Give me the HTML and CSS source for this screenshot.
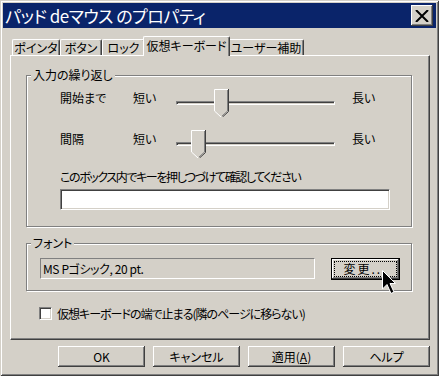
FILE: index.html
```html
<!DOCTYPE html>
<html lang="ja">
  <head>
    <meta charset="UTF-8" />
    <title>パッド deマウス のプロパティ</title>
    <link rel="stylesheet" href="styles.css">
  </head>
  <body>
    <div class="window">
      <div class="titlebar">
        <span class="title">パッド deマウス のプロパティ</span>
        <div class="close">
          <svg width="14" height="12" viewBox="0 0 14 12">
            <path d="M1 0 L13 12 M13 0 L1 12" stroke="#000" stroke-width="2" fill="none" />
          </svg>
        </div>
      </div>

      <div class="content">
        <div class="tabs">
          <div class="tab" style="width: 48px">ポインタ</div>
          <div class="tab" style="width: 42px">ボタン</div>
          <div class="tab" style="width: 43px">ロック</div>
          <div class="tab active" style="width: 87px">仮想キーボード</div>
          <div class="tab" style="width: 76px">ユーザー補助</div>
        </div>

        <div class="panel">
          <div class="group repeat">
            <span class="legend">入力の繰り返し</span>

            <div class="srow">
              <span class="name">開始まで</span>
              <span class="short">短い</span>
              <div class="slider">
                <div class="track"></div>
                <svg class="thumb" style="left: 42px" width="15" height="28" viewBox="0 0 15 28">
                  <polygon points="0,0 15,0 15,22 8,28 7,28 0,22" fill="#d4d0c8" />
                  <path d="M0.5 22 V0.5 H14" stroke="#fff" fill="none" />
                  <path d="M0.5 22 L7 28" stroke="#fff" fill="none" />
                  <path d="M14.5 0 V22.5 L8.5 28" stroke="#404040" fill="none" />
                  <path d="M13.5 1 V22 L8 27" stroke="#808080" fill="none" />
                </svg>
              </div>
              <span class="long">長い</span>
            </div>

            <div class="srow">
              <span class="name">間隔</span>
              <span class="short">短い</span>
              <div class="slider">
                <div class="track"></div>
                <svg class="thumb" style="left: 19px" width="15" height="28" viewBox="0 0 15 28">
                  <polygon points="0,0 15,0 15,22 8,28 7,28 0,22" fill="#d4d0c8" />
                  <path d="M0.5 22 V0.5 H14" stroke="#fff" fill="none" />
                  <path d="M0.5 22 L7 28" stroke="#fff" fill="none" />
                  <path d="M14.5 0 V22.5 L8.5 28" stroke="#404040" fill="none" />
                  <path d="M13.5 1 V22 L8 27" stroke="#808080" fill="none" />
                </svg>
              </div>
              <span class="long">長い</span>
            </div>

            <div class="hint">このボックス内でキーを押しつづけて確認してください</div>
            <div class="keybox"></div>
          </div>

          <div class="group fontgroup">
            <span class="legend">フォント</span>
            <div class="fontrow">
              <div class="fontbox">MS Pゴシック, 20 pt.</div>
              <div class="btn default"><span class="focus">変更...</span></div>
            </div>
          </div>

          <div class="check">
            <span class="box"></span>
            <span class="checklabel">仮想キーボードの端で止まる(隣のページに移らない)</span>
          </div>
        </div>

        <div class="buttons">
          <div class="btn">OK</div>
          <div class="btn">キャンセル</div>
          <div class="btn">適用(<u>A</u>)</div>
          <div class="btn">ヘルプ</div>
        </div>
      </div>

      <svg class="cursor" width="14" height="25" viewBox="0 0 14 25">
        <path d="M0.5 0.5 V19 L5 14.5 L9 23.5 L12 22 L8 13.5 L13.5 13.5 Z" fill="#000" stroke="#fff" />
      </svg>
    </div>
  </body>
</html>
```

FILE: styles.css
```css
body {
  margin: 0;
  background: #d4d0c8;
  font-family: "Noto Sans CJK JP", sans-serif;
  font-size: 12px;
  font-feature-settings: "palt";
  color: #000;
}

.window {
  position: relative;
  width: 439px;
  height: 376px;
  box-sizing: border-box;
  padding: 3px;
  background: #d4d0c8;
  box-shadow: inset 1px 1px #d4d0c8, inset -1px -1px #404040,
    inset 2px 2px #fff, inset -2px -2px #808080;
}

.titlebar {
  height: 25px;
  display: flex;
  align-items: center;
  justify-content: space-between;
  padding: 0 3px 0 2px;
  background: #0a246a;
  color: #fff;
}

.title {
  font-size: 17px;
  line-height: 25px;
  letter-spacing: -0.5px;
}

.close {
  width: 22px;
  height: 21px;
  display: flex;
  align-items: center;
  justify-content: center;
  background: #d4d0c8;
  box-shadow: inset -1px -1px #404040, inset 1px 1px #fff,
    inset -2px -2px #808080;
}

.content {
  padding: 8px 6px 0 7px;
}

.tabs {
  display: flex;
  align-items: flex-end;
  height: 19px;
  padding-left: 2px;
}

.tab {
  height: 16px;
  box-sizing: border-box;
  border-top: 1px solid #fff;
  border-left: 1px solid #fff;
  border-right: 1px solid #404040;
  border-top-left-radius: 2px;
  border-top-right-radius: 2px;
  box-shadow: inset -1px 0 #808080;
  text-align: center;
  line-height: 15px;
}

.tab.active {
  position: relative;
  z-index: 2;
  height: 20px;
  margin: 0 -2px -1px;
  background: #d4d0c8;
  line-height: 18px;
}

.panel {
  height: 285px;
  box-sizing: border-box;
  border: 1px solid;
  border-color: #fff #404040 #404040 #fff;
  box-shadow: inset -1px -1px #808080;
  padding: 19px 0 0 15px;
}

.group {
  position: relative;
  width: 386px;
  box-sizing: border-box;
  border: 1px solid #808080;
  box-shadow: inset 1px 1px #fff, 1px 1px #fff;
}

.legend {
  position: absolute;
  top: -9px;
  left: 4px;
  padding: 0 2px;
  background: #d4d0c8;
  line-height: 16px;
}

.repeat {
  padding: 13px 0 16px 33px;
}

.srow {
  display: flex;
  height: 28px;
  margin-bottom: 13px;
}

.srow:nth-of-type(2) {
  margin-bottom: 11px;
}

.name {
  width: 73px;
  line-height: 18px;
}

.short {
  width: 39px;
  line-height: 18px;
}

.long {
  margin-left: 13px;
  line-height: 18px;
}

.slider {
  position: relative;
  width: 167px;
}

.track {
  position: absolute;
  top: 12px;
  left: 4px;
  right: 4px;
  height: 4px;
  box-sizing: border-box;
  border: 1px solid;
  border-color: #808080 #fff #fff #808080;
  box-shadow: inset 1px 1px #404040;
}

.thumb {
  position: absolute;
  top: 0;
}

.hint {
  line-height: 16px;
  letter-spacing: -1.4px;
}

.keybox {
  margin-top: 4px;
  width: 330px;
  height: 21px;
  box-sizing: border-box;
  background: #fff;
  border: 1px solid;
  border-color: #808080 #fff #fff #808080;
  box-shadow: inset 1px 1px #404040, inset -1px -1px #d4d0c8;
}

.fontgroup {
  margin-top: 16px;
  padding: 14px 0 10px 13px;
}

.fontrow {
  display: flex;
  align-items: flex-start;
}

.fontbox {
  width: 275px;
  height: 21px;
  box-sizing: border-box;
  border: 1px solid;
  border-color: #808080 #fff #fff #808080;
  padding-left: 2px;
  line-height: 19px;
  letter-spacing: -0.4px;
}

.btn {
  width: 87px;
  height: 21px;
  box-sizing: border-box;
  display: flex;
  align-items: center;
  justify-content: center;
  background: #d4d0c8;
  box-shadow: inset -1px -1px #404040, inset 1px 1px #fff,
    inset -2px -2px #808080;
}

.btn.default {
  width: 69px;
  height: 22px;
  margin-left: 16px;
  border: 1px solid #000;
  padding: 2px;
}

.focus {
  flex: 1;
  align-self: stretch;
  border: 1px dotted #000;
  text-align: center;
  line-height: 14px;
  letter-spacing: 2px;
}

.check {
  display: flex;
  align-items: center;
  margin: 16px 0 0 13px;
  height: 13px;
}

.checklabel {
  letter-spacing: -1px;
}

.box {
  width: 13px;
  height: 13px;
  box-sizing: border-box;
  margin-right: 5px;
  background: #fff;
  border: 1px solid;
  border-color: #808080 #fff #fff #808080;
  box-shadow: inset 1px 1px #404040, inset -1px -1px #d4d0c8;
}

.buttons {
  display: flex;
  gap: 8px;
  margin-top: 6px;
  padding-left: 48px;
}

.cursor {
  position: absolute;
  left: 382px;
  top: 270px;
}
```
